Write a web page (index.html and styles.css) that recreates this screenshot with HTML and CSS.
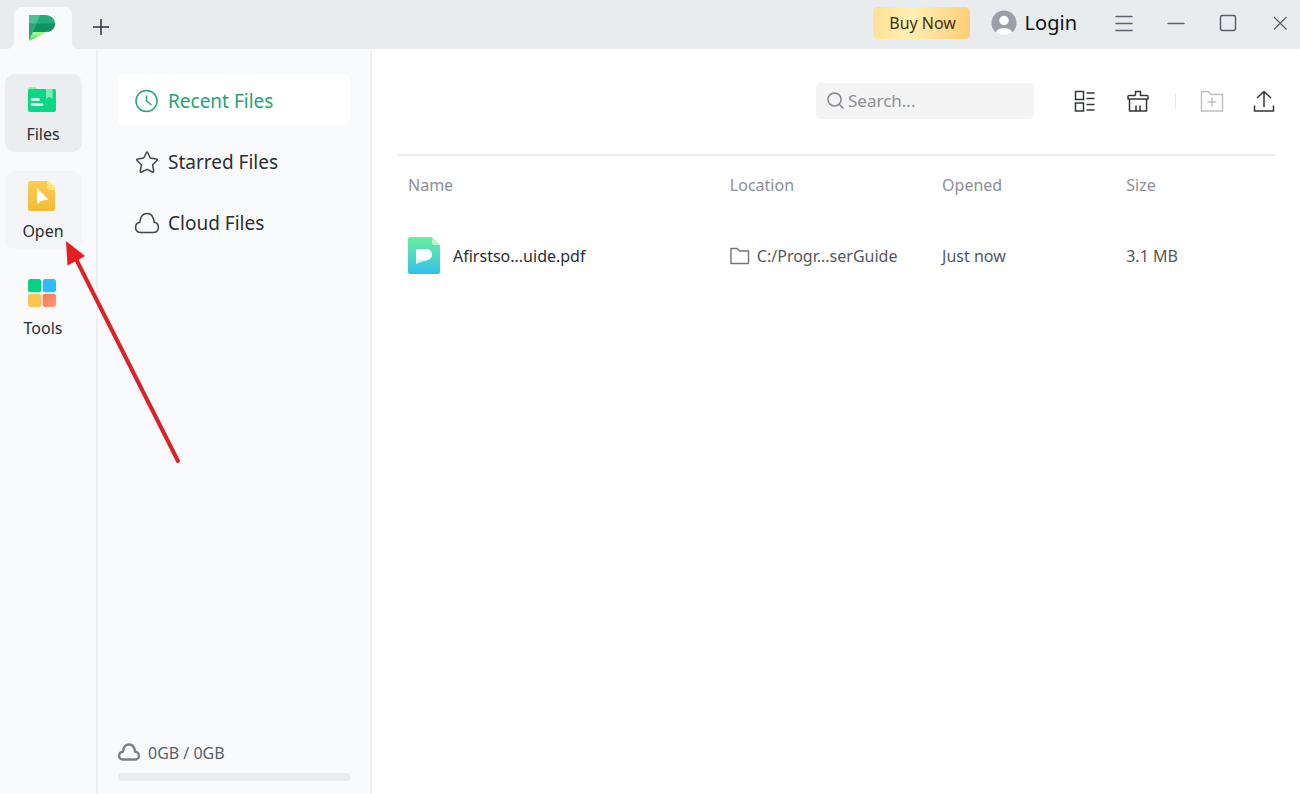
FILE: index.html
```html
<!DOCTYPE html>
<html lang="en">
<head>
<meta charset="utf-8">
<title>Files</title>
<link rel="stylesheet" href="styles.css">
</head>
<body>
<div class="app">
  <header class="titlebar">
    <button class="tab" aria-label="Home">
      <svg width="28" height="26" viewBox="0 0 28 26">
        <defs><linearGradient id="lg" x1="0" x2="0" y1="0" y2="1"><stop offset="0" stop-color="#b4f58a"/><stop offset="1" stop-color="#45e070"/></linearGradient></defs>
        <path d="M0 26 4 17H17Q11 21 0 26Z" fill="url(#lg)"/>
        <path d="M0 0H16C22 0 26 4 26 8.500C26 13.500 22 17 16 17H4L0 25Z" fill="#1fae79"/>
        <path d="M7 8.500H26C26 13.500 22 17 16 17H4Z" fill="#10935f"/>
        <path d="M0 0H11L0 25Z" fill="#4cc197"/>
        <path d="M0 8.500H7L0 25Z" fill="#2aa878"/>
      </svg>
    </button>
    <button class="icon-btn add" aria-label="New tab">
      <svg width="16" height="16" viewBox="0 0 16 16" stroke="#2c3042" stroke-width="1.500"><path d="M0 8H16M8 0V16"/></svg>
    </button>
    <div class="title-actions">
      <button class="buy">Buy Now</button>
      <button class="login">
        <svg width="26" height="26" viewBox="0 0 26 26">
          <defs><clipPath id="av"><circle cx="13" cy="13" r="12.500"/></clipPath></defs>
          <g clip-path="url(#av)"><path d="M0 0H26V26H0Z" fill="#9c9da9"/><circle cx="13" cy="10.500" r="4.700" fill="#fff"/><path d="M3.500 26Q4.500 18 13 18T22.500 26Z" fill="#fff"/></g>
        </svg>
        <span>Login</span>
      </button>
      <div class="window-controls">
        <button class="icon-btn" aria-label="Menu"><svg width="20" height="18" viewBox="0 0 20 18" stroke="#5b606b" stroke-width="1.500" stroke-linecap="round"><path d="M2 2.500H18M2 9.500H18M2 16.500H18"/></svg></button>
        <button class="icon-btn" aria-label="Minimize"><svg width="20" height="18" viewBox="0 0 20 18" stroke="#5b606b" stroke-width="1.500" stroke-linecap="round"><path d="M2 9.500H18"/></svg></button>
        <button class="icon-btn" aria-label="Maximize"><svg width="20" height="18" viewBox="0 0 20 18" fill="none" stroke="#5b606b" stroke-width="1.500"><rect x="2.500" y="1.500" width="15" height="15" rx="2"/></svg></button>
        <button class="icon-btn" aria-label="Close"><svg width="20" height="18" viewBox="0 0 20 18" stroke="#5b606b" stroke-width="1.200"><path d="M4 3 16.500 15.500M16.500 3 4 15.500"/></svg></button>
      </div>
    </div>
  </header>

  <div class="body">
    <nav class="rail" aria-label="Sections">
      <button class="rail-item active">
        <svg width="30" height="30" viewBox="0 0 30 30">
          <path d="M1 8V4.500Q1 3 2.500 3H8.500L11 6.500V9H1Z" fill="#8df0a0"/>
          <rect x="1" y="5" width="28" height="23" rx="2" fill="#0bd789"/>
          <path d="M19 5H25.500V15L22.200 12.500 19 15Z" fill="#7cf0b4"/>
          <path d="M5 15.500H11.500M5 20.500H15" stroke="#fff" stroke-width="2.600" stroke-linecap="round"/>
        </svg>
        <span>Files</span>
      </button>
      <button class="rail-item hover">
        <svg width="30" height="30" viewBox="0 0 30 30">
          <defs><linearGradient id="og" x1="0" x2="0" y1="0" y2="1"><stop offset="0" stop-color="#ffcb58"/><stop offset="1" stop-color="#f5bb35"/></linearGradient></defs>
          <path d="M3 0H21L28 7V28Q28 30 26 30H3Q1 30 1 28V2Q1 0 3 0Z" fill="url(#og)"/>
          <path d="M20 0.500Q22 0 23 1L27.500 5.500Q28.500 6.500 28 9H23Q20 9 20 6Z" fill="#fde676"/>
          <path d="M10 7V23.500L14 20 21.500 18.500Z" fill="#fff"/>
        </svg>
        <span>Open</span>
      </button>
      <button class="rail-item">
        <svg width="30" height="30" viewBox="0 0 30 30">
          <defs><linearGradient id="tg" x1="0" x2="1" y1="0" y2="1"><stop offset="0" stop-color="#ff7550"/><stop offset="1" stop-color="#ff9c80"/></linearGradient></defs>
          <rect x="1" y="1" width="13.300" height="13.300" rx="2.500" fill="#08d287"/>
          <rect x="15.700" y="1" width="13.300" height="13.300" rx="2.500" fill="#2dbdfc"/>
          <rect x="1" y="15.700" width="13.300" height="13.300" rx="2.500" fill="#fbc553"/>
          <rect x="15.700" y="15.700" width="13.300" height="13.300" rx="2.500" fill="url(#tg)"/>
        </svg>
        <span>Tools</span>
      </button>
    </nav>

    <aside class="panel">
      <nav class="sources" aria-label="File sources">
        <button class="source active">
          <svg width="24" height="24" viewBox="0 0 24 24" fill="none" stroke="#22a573" stroke-width="1.500" stroke-linecap="round"><circle cx="11.500" cy="12" r="10.500"/><path d="M11.500 7V12L16 15.500"/></svg>
          <span>Recent Files</span>
        </button>
        <button class="source">
          <svg width="24" height="24" viewBox="0 0 24 24" fill="none" stroke="#42444f" stroke-width="1.500" stroke-linejoin="round"><path d="M11.300 2.800Q12 1.300 12.700 2.800L15.200 8 21.300 8.900Q23 9.300 21.900 10.500L17.600 14.700 18.700 21Q18.800 22.600 17.400 22L12 19.300 6.600 22Q5.200 22.600 5.300 21L6.400 14.700 2.100 10.500Q1 9.300 2.700 8.900L8.800 8Z"/></svg>
          <span>Starred Files</span>
        </button>
        <button class="source">
          <svg width="24" height="24" viewBox="0 0 24 24" fill="none" stroke="#42444f" stroke-width="1.500"><path d="M6 21.500C-1 21.500-1 12.500 4.800 11.300C5.500 5.500 8.500 2.500 12 2.500S18.500 5.500 19.200 11.300C25 12.500 25 21.500 18 21.500Z"/></svg>
          <span>Cloud Files</span>
        </button>
      </nav>
      <div class="storage">
        <div class="storage-label">
          <svg width="22" height="20" viewBox="0 0 22 20" fill="none" stroke="#7d7f89" stroke-width="2.300"><path d="M5.500 16.500C-.5 16.500 0 9.500 5 8.500C5.500 4 8 1.500 11 1.500S16.500 4 17 8.500C22 9.500 22.500 16.500 16.500 16.500Z"/></svg>
          <span>0GB / 0GB</span>
        </div>
        <div class="storage-bar"></div>
      </div>
    </aside>

    <main class="content">
      <div class="toolbar">
        <label class="search">
          <svg width="18" height="18" viewBox="0 0 18 18" fill="none" stroke="#85868f" stroke-width="1.500"><circle cx="7.500" cy="7.500" r="6.500"/><path d="M12 12 16.500 16.500"/></svg>
          <input type="text" placeholder="Search..." aria-label="Search">
        </label>
        <div class="tools">
          <button class="icon-btn" aria-label="List view"><svg width="22" height="22" viewBox="0 0 22 22" fill="none" stroke="#33353f" stroke-width="1.500"><path d="M1.500 1.500H9.500V9.500H1.500ZM1.500 13H9.500V21H1.500ZM12.500 3H20.500M12.500 8.500H20.500M12.500 14.500H20.500M12.500 20H20.500"/></svg></button>
          <button class="icon-btn" aria-label="Clear list"><svg width="22" height="22" viewBox="0 0 22 22" fill="none" stroke="#33353f" stroke-width="1.500" stroke-linejoin="round"><path d="M8.500 5.500V1.500H13.500V5.500H20Q21 5.500 21 6.500V9H1V6.500Q1 5.500 2 5.500H8.500M2.500 9V21H19.500V9M9 21V15.500M13 21V15.500"/></svg></button>
          <span class="divider"></span>
          <button class="icon-btn" aria-label="New folder" disabled><svg width="24" height="22" viewBox="0 0 24 22" fill="none" stroke="#bdbec4" stroke-width="1.400"><path d="M1.500 1.500H8L11 4.500H22.500V21H1.500ZM12 7.500V16.500M7.500 12H16.500"/></svg></button>
          <button class="icon-btn upload" aria-label="Upload"><svg width="22" height="22" viewBox="0 0 22 22" fill="none" stroke="#33353f" stroke-width="1.500"><path d="M11 17V1.500M4 8 11 1.500 18 8M1.500 15.500V21H20.500V15.500"/></svg></button>
        </div>
      </div>
      <table class="files">
        <thead><tr><th class="name">Name</th><th class="location">Location</th><th class="opened">Opened</th><th>Size</th></tr></thead>
        <tbody><tr>
          <td><div class="cell file">
            <svg width="32" height="38" viewBox="0 0 32 38">
              <defs><linearGradient id="fg" x1="0" x2="0" y1="0" y2="1"><stop offset="0" stop-color="#6aee9c"/><stop offset="1" stop-color="#32c1ed"/></linearGradient></defs>
              <path d="M2 0H24L32 8V35Q32 37 30 37H2Q0 37 0 35V2Q0 0 2 0Z" fill="url(#fg)"/>
              <path d="M24 0 32 8H26Q24 8 24 6Z" fill="#b9f8c5"/>
              <path d="M8 12H18C22 12 24 14.500 24 17.500C24 21 21 23.500 17 23.500Q12 24 8 27Z" fill="#fff"/>
              <path d="M8 27 10 22.500 19 23.300Q13 25 8 27Z" fill="#c9f4ed"/>
            </svg><span>Afirstso...uide.pdf</span></div></td>
          <td><div class="cell path"><svg width="20" height="18" viewBox="0 0 20 18" fill="none" stroke="#73757d" stroke-width="1.400"><path d="M1 1.500H7L9.500 4H18.500V16.500H1Z"/></svg><span>C:/Progr...serGuide</span></div></td>
          <td>Just now</td>
          <td>3.1 MB</td>
        </tr></tbody>
      </table>
    </main>
  </div>
  <svg class="pointer" width="120" height="226" viewBox="0 0 120 226" aria-hidden="true">
    <path d="M11 18 113 220" stroke="#dc2229" stroke-width="4" stroke-linecap="round"/>
    <path d="M1 0 20 15 13 19 2.500 24.500Z" fill="#e81c24"/>
  </svg>
</div>
</body>
</html>
```

FILE: styles.css
```css
* { box-sizing: border-box; }
body {
  margin: 0;
  font-family: "Noto Sans", "Open Sans", sans-serif;
  font-size: 16px;
  line-height: 24px;
  color: #2b2d33;
}
button {
  font: inherit;
  color: inherit;
  background: none;
  border: 0;
  padding: 0;
}
svg { display: block; flex: none; }

.app {
  position: relative;
  display: flex;
  flex-direction: column;
  min-height: 100vh;
  background: #fff;
}

.titlebar {
  display: flex;
  align-items: center;
  height: 49px;
  padding: 0 10px 0 14px;
  background: #e8ecef;
}
.tab {
  position: relative;
  align-self: flex-end;
  display: flex;
  align-items: center;
  justify-content: center;
  width: 58px;
  height: 42px;
  background: #f9fafc;
  border-radius: 8px 8px 0 0;
}
.tab::before,
.tab::after {
  content: "";
  position: absolute;
  bottom: 0;
  width: 8px;
  height: 8px;
}
.tab::before {
  right: 100%;
  background: radial-gradient(circle at 0 0, #e8ecef 8px, #f9fafc 8px);
}
.tab::after {
  left: 100%;
  background: radial-gradient(circle at 100% 0, #e8ecef 8px, #f9fafc 8px);
}
.icon-btn { display: flex; align-items: center; justify-content: center; }
.add { margin: 5px 0 0 21px; }
.title-actions {
  display: flex;
  align-items: center;
  gap: 21px;
  margin-left: auto;
  padding-bottom: 3px;
}
.buy {
  width: 97px;
  height: 32px;
  padding-left: 3px;
  border-radius: 5px;
  background: linear-gradient(100deg, #ffe093, #fff0b2 40%, #ffcb76);
  color: #3f3010;
}
.login {
  display: flex;
  align-items: center;
  gap: 8px;
  font-size: 20px;
  color: #111;
}
.window-controls { display: flex; gap: 32px; margin-left: 16px; }

.body { display: flex; flex: 1; }
.rail {
  display: flex;
  flex-direction: column;
  gap: 19px;
  width: 98px;
  padding: 25px 14px 0 5px;
  background: #f9fafc;
  border-right: 2px solid #eeeff1;
}
.rail-item {
  display: flex;
  flex-direction: column;
  align-items: center;
  gap: 10px;
  height: 78px;
  padding: 10px 3px 0 0;
  border-radius: 10px;
}
.rail-item span { padding-left: 2px; line-height: 20px; }
.rail-item.active { background: #ecedef; }
.rail-item.hover { background: #f4f5f7; }

.panel {
  display: flex;
  flex-direction: column;
  justify-content: space-between;
  width: 274px;
  padding: 25px 20px 13px;
  background: #f9fafc;
  border-right: 2px solid #eeeff1;
}
.sources { display: flex; flex-direction: column; gap: 10px; }
.source {
  display: flex;
  align-items: center;
  gap: 9px;
  height: 51px;
  padding: 3px 16px 0 17px;
  border-radius: 5px;
  font-size: 19px;
}
.source.active { background: #fff; color: #22a573; }
.storage-label { display: flex; align-items: center; gap: 8px; color: #5c5e66; }
.storage-bar { height: 8px; margin-top: 8px; background: #ebecee; border-radius: 2px; }

.content { flex: 1; min-width: 0; padding: 34px 25px 0 26px; }
.toolbar {
  display: flex;
  justify-content: flex-end;
  gap: 40px;
  padding-bottom: 35px;
  border-bottom: 2px solid #ededee;
}
.search {
  display: flex;
  align-items: center;
  gap: 3px;
  width: 218px;
  height: 36px;
  padding: 0 11px;
  background: #f4f4f5;
  border-radius: 5px;
}
.search input {
  flex: 1;
  min-width: 0;
  padding: 0;
  border: 0;
  outline: 0;
  background: none;
  font: inherit;
  font-size: 17px;
  color: #33353f;
}
.search input::placeholder { color: #8e8f96; opacity: 1; }
.tools { display: flex; align-items: center; }
.tools .icon-btn + .icon-btn { margin-left: 31px; }
.tools .icon-btn + .upload { margin-left: 29px; }
.divider { width: 1px; height: 16px; margin: 0 24px 0 26px; background: #e6e6e8; }

.files { width: 100%; table-layout: fixed; border-collapse: collapse; color: #55575e; }
.files th { height: 58px; padding: 0 0 0 10px; text-align: left; font-weight: 400; color: #8d8f97; }
.files td { height: 84px; padding: 0 0 0 10px; white-space: nowrap; }
.files .name { width: 36.7%; }
.files .location { width: 24.2%; }
.files .opened { width: 21%; }
.cell { display: flex; align-items: center; }
.file { gap: 13px; color: #2b2d33; }
.path { gap: 7px; }

.pointer { position: absolute; left: 65px; top: 241px; fill: none; pointer-events: none; }
```
